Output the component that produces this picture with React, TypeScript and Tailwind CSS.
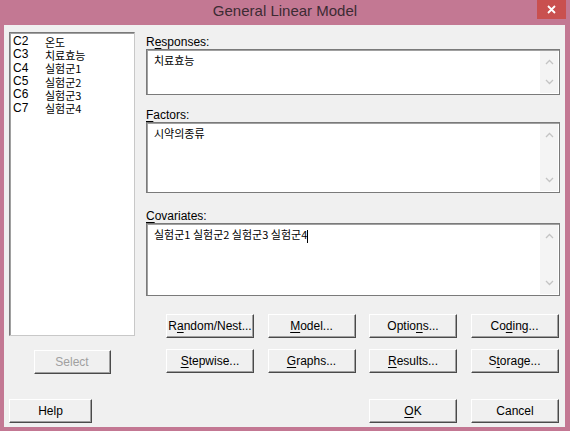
import type { ReactNode } from 'react';

const UI_FONT = "font-['Liberation_Sans','Noto_Sans_CJK_KR',sans-serif]";
const KO_FONT = "font-['Noto_Sans_CJK_KR','Liberation_Sans',sans-serif]";

const columns = [
  { id: 'C2', name: '온도' },
  { id: 'C3', name: '치료효능' },
  { id: 'C4', name: '실험군1' },
  { id: 'C5', name: '실험군2' },
  { id: 'C6', name: '실험군3' },
  { id: 'C7', name: '실험군4' },
];

// label text with one letter underlined as the keyboard accelerator
function Accel({ text, at }: { text: string; at?: number }) {
  if (at === undefined) return <>{text}</>;
  return (
    <>
      {text.slice(0, at)}
      <span className="underline underline-offset-[2px] decoration-1">{text[at]}</span>
      {text.slice(at + 1)}
    </>
  );
}

function Button({
  label,
  at,
  disabled,
  className = 'w-[88px]',
}: {
  label: string;
  at?: number;
  disabled?: boolean;
  className?: string;
}) {
  return (
    <button
      className={`${className} h-[24px] shrink-0 bg-[#f0f0f0] border border-t-white border-l-white border-r-[#4a4a4a] border-b-[#4a4a4a] shadow-[inset_-1px_-1px_#a0a0a0] text-[12px] leading-none ${
        disabled ? 'text-[#a0a0a0]' : 'text-black'
      }`}
    >
      <Accel text={label} at={at} />
    </button>
  );
}

function Chevron({ up }: { up?: boolean }) {
  return (
    <svg width="9" height="6" viewBox="0 0 9 6">
      <path
        d={up ? 'M1 5 L4.5 1.5 L8 5' : 'M1 1 L4.5 4.5 L8 1'}
        fill="none"
        stroke="#c4c4c4"
        strokeWidth="1.3"
      />
    </svg>
  );
}

function Field({ children, height }: { children?: ReactNode; height: string }) {
  return (
    <div
      className={`${height} flex bg-white border border-[#7a7a7a] shadow-[inset_1px_1px_#a0a0a0]`}
    >
      <div className={`flex-1 pl-[7px] pt-[3px] text-[11px] leading-[14px] text-black ${KO_FONT}`}>
        {children}
      </div>
      <div className="w-[18px] my-[1px] mr-[1px] bg-[#f4f4f4] flex flex-col items-center justify-between py-[8px]">
        <Chevron up />
        <Chevron />
      </div>
    </div>
  );
}

function FieldLabel({ text, at, top }: { text: string; at: number; top: string }) {
  return (
    <div className={`${top} h-[13px] text-[12px] leading-[13px] text-black`}>
      <Accel text={text} at={at} />
    </div>
  );
}

export default function App() {
  return (
    <div className={`w-[570px] h-[431px] bg-[#c37893] flex flex-col ${UI_FONT}`}>
      {/* title bar */}
      <div className="h-[25px] relative flex items-center justify-center">
        <span className="text-[15px] text-[#3c2b33] pb-[2px]">General Linear Model</span>
        <div className="absolute right-[4px] top-0 w-[29px] h-[19px] bg-[#c9504f] flex items-center justify-center">
          <svg width="9" height="9" viewBox="0 0 9 9">
            <path d="M1 1 L8 8 M8 1 L1 8" stroke="white" strokeWidth="1.8" />
          </svg>
        </div>
      </div>

      {/* client area */}
      <div className="flex-1 ml-[4px] mr-[5px] mb-[4px] bg-[#f0f0f0] pl-[5px] pr-[5px] pt-[7px] flex flex-col">
        <div className="flex gap-[11px]">
          {/* variable list */}
          <div className="w-[126px] flex flex-col items-center">
            <div className="w-full h-[304px] bg-white border border-t-[#7a7a7a] border-l-[#7a7a7a] border-r-[#c8c8c8] border-b-[#c8c8c8] shadow-[inset_1px_1px_#a0a0a0] pl-[3px] pt-[2px]">
              {columns.map((c) => (
                <div key={c.id} className="flex items-center h-[13.3px] text-[12px] leading-[13px] text-black">
                  <span className="w-[32px]">{c.id}</span>
                  <span className={`${KO_FONT} text-[11px] leading-[12px]`}>{c.name}</span>
                </div>
              ))}
            </div>
            <div className="mt-[13px]">
              <Button label="Select" disabled className="w-[77px]" />
            </div>
          </div>

          {/* fields */}
          <div className="flex-1 flex flex-col">
            <FieldLabel text="Responses:" at={1} top="mt-[4px]" />
            <Field height="h-[46px]">치료효능</Field>
            <FieldLabel text="Factors:" at={0} top="mt-[14px]" />
            <Field height="h-[71px]">시약의종류</Field>
            <FieldLabel text="Covariates:" at={0} top="mt-[17px]" />
            <Field height="h-[73px]">
              <span>실험군1 실험군2 실험군3 실험군4</span>
              <span className="inline-block w-px h-[13px] bg-black align-middle" />
            </Field>

            <div className="ml-[20px] mr-[2px] mt-[18px] grid grid-cols-4 gap-x-[14px] gap-y-[11px]">
              <Button label="Random/Nest..." at={1} />
              <Button label="Model..." at={0} />
              <Button label="Options..." at={5} />
              <Button label="Coding..." at={2} />
              <Button label="Stepwise..." at={0} />
              <Button label="Graphs..." at={0} />
              <Button label="Results..." at={0} />
              <Button label="Storage..." at={1} />
            </div>
          </div>
        </div>

        {/* bottom buttons */}
        <div className="mt-[25px] flex items-center justify-between pr-[1px]">
          <Button label="Help" className="w-[83px]" />
          <div className="flex gap-[14px]">
            <Button label="OK" at={0} />
            <Button label="Cancel" />
          </div>
        </div>
      </div>
    </div>
  );
}
